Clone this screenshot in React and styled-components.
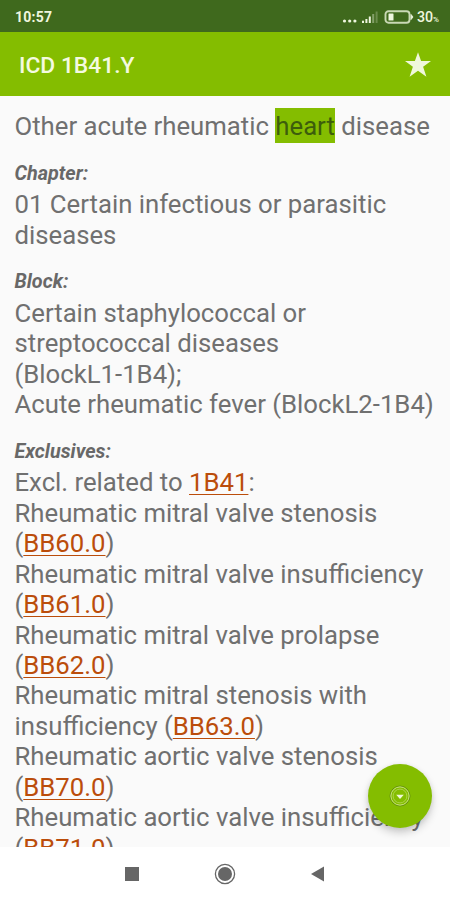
import React from "react";
import styled, { createGlobalStyle } from "styled-components";

const GlobalStyle = createGlobalStyle`
  * { box-sizing: border-box; }
  body { margin: 0; background: #fff; font-family: Roboto, sans-serif; }
`;

const Screen = styled.div`
  position: relative;
  display: flex;
  flex-direction: column;
  width: 450px;
  height: 900px;
  overflow: hidden;
  background: #fafafa;
`;

const StatusBar = styled.header`
  display: flex;
  align-items: center;
  justify-content: space-between;
  height: 32px;
  padding: 1px 11px 0 15px;
  flex: none;
  background: #3f691d;
  color: #eef6df;
`;

const Clock = styled.span`
  font-size: 14px;
  font-weight: 700;
  letter-spacing: 0.25px;
`;

const StatusIcons = styled.div`
  display: flex;
  align-items: center;
`;

const BatteryLevel = styled.span`
  margin-left: 2.5px;
  font-size: 14.2px;
  font-weight: 500;
`;

const Percent = styled.span`
  font-size: 8px;
`;

const AppBar = styled.div`
  display: flex;
  align-items: center;
  justify-content: space-between;
  flex: none;
  height: 64px;
  padding: 2px 18px 0 19px;
  background: #84bd00;
  color: #f4fae0;
`;

const Title = styled.h1`
  margin: 2px 0 0;
  font-size: 22.8px;
  font-weight: 500;
  line-height: 30px;
`;

const Content = styled.main`
  flex: 1;
  min-height: 0;
  overflow: hidden;
  padding: 15px 0 0 14.5px;
  color: #707070;
`;

const Section = styled.section`
  margin-bottom: 20.2px;
`;

const Label = styled.h2`
  margin: 0 0 3.6px;
  font-size: 19.8px;
  font-weight: 700;
  font-style: italic;
  line-height: 24px;
  color: #686868;
`;

const Line = styled.p`
  margin: 0;
  font-size: 25.72px;
  line-height: 30.43px;
  white-space: nowrap;
`;

const Heading = styled(Line)`
  margin-bottom: 20.2px;
`;

const Highlight = styled.mark`
  display: inline-block;
  height: 35px;
  margin: -3px 0;
  padding-top: 3px;
  background: #84bd00;
  color: #3d5d0c;
`;

const CodeLink = styled.a`
  color: #bb4d0b;
  text-decoration: underline;
  text-decoration-thickness: 1.3px;
  text-underline-offset: 3px;
  text-decoration-skip-ink: none;
`;

const Fab = styled.button`
  position: absolute;
  left: 368px;
  top: 764px;
  display: grid;
  place-items: center;
  width: 64px;
  height: 64px;
  padding: 0;
  border: 0;
  border-radius: 50%;
  background: #84bd00;
  box-shadow: 0 5px 8px rgba(0, 0, 0, 0.18), 0 1px 5px rgba(0, 0, 0, 0.08);
`;

const NavBar = styled.nav`
  display: flex;
  flex: none;
  align-items: center;
  justify-content: space-between;
  height: 53px;
  padding: 0 124px 0 124px;
  background: #fff;
`;

const exclusions = [
  ["Rheumatic mitral valve stenosis", "", "BB60.0"],
  ["Rheumatic mitral valve insufficiency", "", "BB61.0"],
  ["Rheumatic mitral valve prolapse", "", "BB62.0"],
  ["Rheumatic mitral stenosis with", "insufficiency ", "BB63.0"],
  ["Rheumatic aortic valve stenosis", "", "BB70.0"],
  ["Rheumatic aortic valve insufficiency", "", "BB71.0"],
];

const SignalIcon = () => (
  <svg width="42" height="16" viewBox="0 0 42 16" fill="#eef6df">
    <circle cx="2.5" cy="12" r="1.6" />
    <circle cx="7.7" cy="12" r="1.6" />
    <circle cx="12.9" cy="12" r="1.6" />
    <rect x="20" y="11.7" width="2" height="2.3" />
    <rect x="23.4" y="10" width="2" height="4" />
    <rect x="26.8" y="7.5" width="2" height="6.5" />
    <rect x="30.2" y="5" width="2" height="9" opacity=".4" />
    <rect x="33.6" y="2.5" width="2" height="11.5" opacity=".25" />
  </svg>
);

const BatteryIcon = () => (
  <svg width="30" height="16" viewBox="0 0 30 16" fill="none">
    <rect x="1.5" y="2.2" width="24" height="11.6" rx="3" stroke="#c9d9b5" strokeWidth="1.9" />
    <path d="M27 5.5 29 8 27 10.5Z" fill="#e6efd8" stroke="#e6efd8" />
    <rect x="4.5" y="4.5" width="5" height="7" rx=".5" fill="#eef6df" />
  </svg>
);

const StarIcon = () => (
  <svg width="28" height="28" viewBox="0 0 28 28">
    <path d="M14 1.2 17.1 10.1H27L19.1 15.8 22.4 25.7 14 19.8 5.6 25.7 8.9 15.8 1 10.1H10.9Z" fill="#f0f8db" />
  </svg>
);

const DownIcon = () => (
  <svg width="22" height="22" viewBox="0 0 22 22" fill="none">
    <circle cx="11" cy="11" r="10" stroke="#5d8510" strokeWidth=".8" />
    <circle cx="11" cy="11" r="9.1" stroke="#c6e17e" strokeWidth="1" />
    <circle cx="11" cy="11" r="6.9" stroke="#b5d85b" strokeWidth=".8" />
    <path d="M7.2 9.7H14.8L11 14Z" fill="#eff8d5" />
  </svg>
);

export default function App() {
  return (
    <>
      <GlobalStyle />
      <Screen>
        <StatusBar>
          <Clock>10:57</Clock>
          <StatusIcons>
            <SignalIcon />
            <BatteryIcon />
            <BatteryLevel>30<Percent>%</Percent></BatteryLevel>
          </StatusIcons>
        </StatusBar>
        <AppBar>
          <Title>ICD 1B41.Y</Title>
          <StarIcon />
        </AppBar>
        <Content>
          <Heading>Other acute rheumatic <Highlight>heart</Highlight> disease</Heading>
          <Section>
            <Label>Chapter:</Label>
            <Line>01 Certain infectious or parasitic</Line>
            <Line>diseases</Line>
          </Section>
          <Section>
            <Label>Block:</Label>
            <Line>Certain staphylococcal or</Line>
            <Line>streptococcal diseases</Line>
            <Line>(BlockL1-1B4);</Line>
            <Line>Acute rheumatic fever (BlockL2-1B4)</Line>
          </Section>
          <Section>
            <Label>Exclusives:</Label>
            <Line>Excl. related to <CodeLink>1B41</CodeLink>:</Line>
            {exclusions.map(([name, rest, code]) => (
              <React.Fragment key={code}>
                <Line>{name}</Line>
                <Line>{rest}(<CodeLink>{code}</CodeLink>)</Line>
              </React.Fragment>
            ))}
          </Section>
        </Content>
        <NavBar>
          <svg width="16" height="16"><rect x="1" y="1" width="14" height="14" fill="#666" /></svg>
          <svg width="22" height="22" viewBox="0 0 22 22">
            <circle cx="11" cy="11" r="9.6" fill="none" stroke="#666" strokeWidth="1.3" />
            <circle cx="11" cy="11" r="7" fill="#666" />
          </svg>
          <svg width="16" height="16"><path d="M1 8 14 .5V15.5Z" fill="#666" /></svg>
        </NavBar>
        <Fab aria-label="Next"><DownIcon /></Fab>
      </Screen>
    </>
  );
}
